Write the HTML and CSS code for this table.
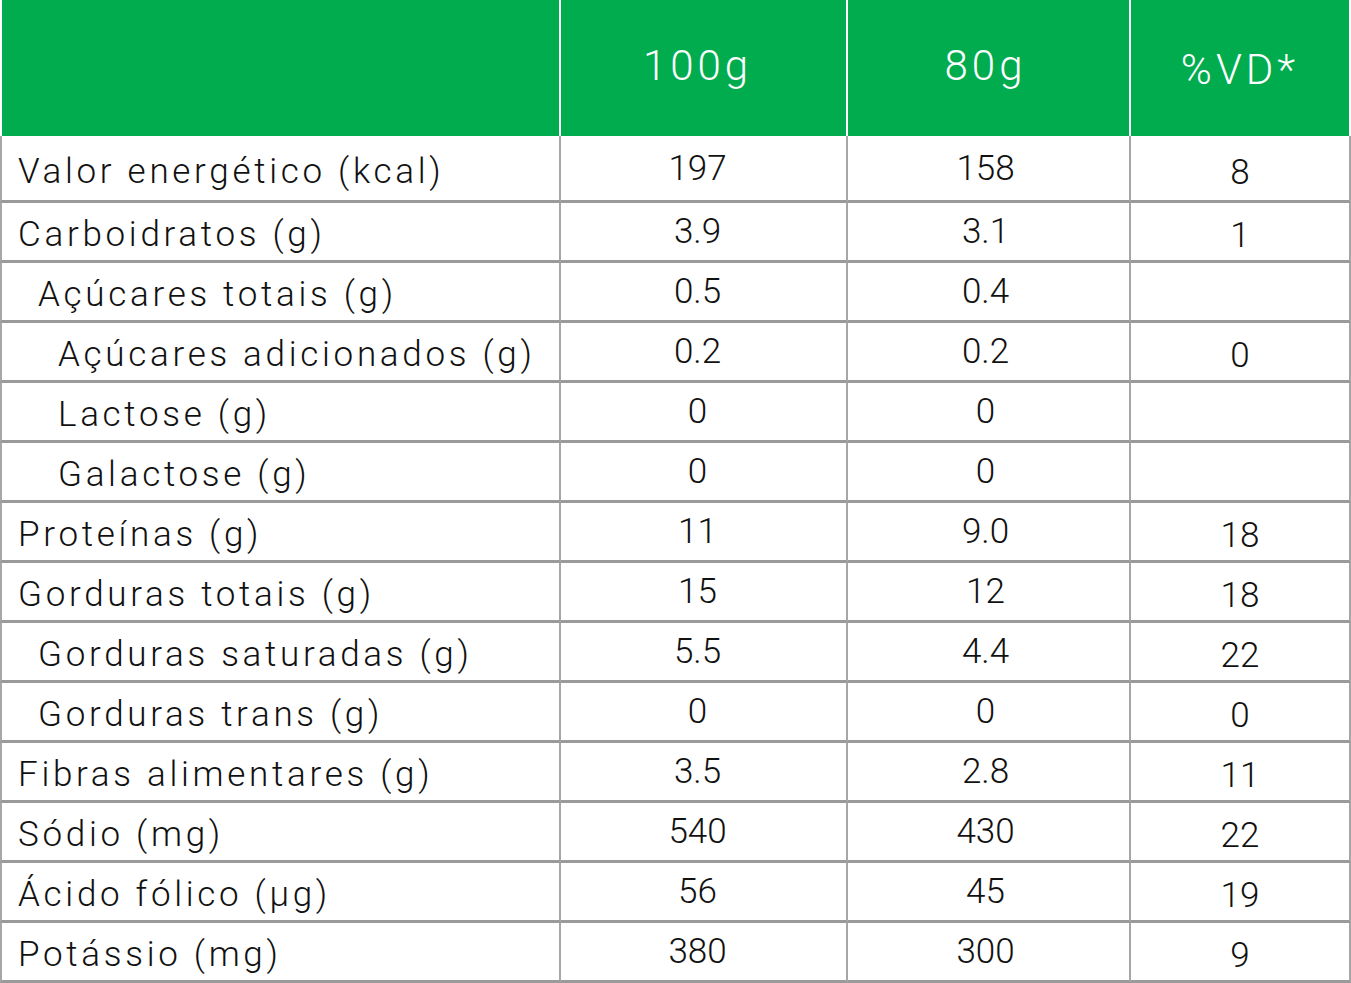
FILE: index.html
```html
<!DOCTYPE html>
<html lang="pt-BR">
<head>
<meta charset="utf-8">
<title>Tabela nutricional</title>
<link rel="stylesheet" href="styles.css">
</head>
<body>
<div class="table">
  <div class="hd hd-first"></div>
  <div class="hd num c2">100g</div>
  <div class="hd num c3">80g</div>
  <div class="hd vd">%VD*</div>

  <div class="c lbl first-row">Valor energético (kcal)</div>
  <div class="c num c2 first-row">197</div>
  <div class="c num c3 first-row">158</div>
  <div class="c vd first-row">8</div>

  <div class="c lbl">Carboidratos (g)</div>
  <div class="c num c2">3.9</div>
  <div class="c num c3">3.1</div>
  <div class="c vd">1</div>

  <div class="c lbl l1">Açúcares totais (g)</div>
  <div class="c num c2">0.5</div>
  <div class="c num c3">0.4</div>
  <div class="c vd"></div>

  <div class="c lbl l2">Açúcares adicionados (g)</div>
  <div class="c num c2">0.2</div>
  <div class="c num c3">0.2</div>
  <div class="c vd">0</div>

  <div class="c lbl l2">Lactose (g)</div>
  <div class="c num c2">0</div>
  <div class="c num c3">0</div>
  <div class="c vd"></div>

  <div class="c lbl l2">Galactose (g)</div>
  <div class="c num c2">0</div>
  <div class="c num c3">0</div>
  <div class="c vd"></div>

  <div class="c lbl">Proteínas (g)</div>
  <div class="c num c2">11</div>
  <div class="c num c3">9.0</div>
  <div class="c vd">18</div>

  <div class="c lbl">Gorduras totais (g)</div>
  <div class="c num c2">15</div>
  <div class="c num c3">12</div>
  <div class="c vd">18</div>

  <div class="c lbl l1">Gorduras saturadas (g)</div>
  <div class="c num c2">5.5</div>
  <div class="c num c3">4.4</div>
  <div class="c vd">22</div>

  <div class="c lbl l1">Gorduras trans (g)</div>
  <div class="c num c2">0</div>
  <div class="c num c3">0</div>
  <div class="c vd">0</div>

  <div class="c lbl">Fibras alimentares (g)</div>
  <div class="c num c2">3.5</div>
  <div class="c num c3">2.8</div>
  <div class="c vd">11</div>

  <div class="c lbl">Sódio (mg)</div>
  <div class="c num c2">540</div>
  <div class="c num c3">430</div>
  <div class="c vd">22</div>

  <div class="c lbl">Ácido fólico (µg)</div>
  <div class="c num c2">56</div>
  <div class="c num c3">45</div>
  <div class="c vd">19</div>

  <div class="c lbl">Potássio (mg)</div>
  <div class="c num c2">380</div>
  <div class="c num c3">300</div>
  <div class="c vd">9</div>
</div>
</body>
</html>
```

FILE: styles.css
```css
html, body {
  margin: 0;
  padding: 0;
  background: #ffffff;
}

.table {
  display: grid;
  grid-template-columns: 561px 287px 283px 220px;
  width: 1351px;
  font-family: Roboto, "Liberation Sans", sans-serif;
  font-weight: 300;
  color: #111111;
}

.hd {
  box-sizing: border-box;
  height: 136px;
  background: #00ac4e;
  color: #ffffff;
  font-size: 42px;
  border-right: 2px solid #ffffff;
  display: flex;
  align-items: center;
  justify-content: center;
  letter-spacing: 4px;
}

.hd-first {
  border-left: 2px solid #ffffff;
}

.hd.num {
  padding-bottom: 6px;
}

.hd.vd {
  padding-top: 2px;
}

.c {
  box-sizing: border-box;
  height: 60px;
  border-right: 2px solid #a6a6a6;
  border-bottom: 3px solid #9a9a9a;
  display: flex;
  align-items: center;
  font-size: 35px;
}

.c.first-row {
  height: 67px;
}

.lbl {
  border-left: 2px solid #a6a6a6;
  padding-left: 16px;
  padding-top: 6px;
  letter-spacing: 3.7px;
}

.lbl.l1 {
  padding-left: 36px;
}

.lbl.l2 {
  padding-left: 56px;
}

.num {
  justify-content: center;
  padding-bottom: 0;
}

.c2 {
  padding-right: 12px;
}

.c3 {
  padding-right: 6px;
}

.vd {
  justify-content: center;
  padding-top: 8px;
}
```
